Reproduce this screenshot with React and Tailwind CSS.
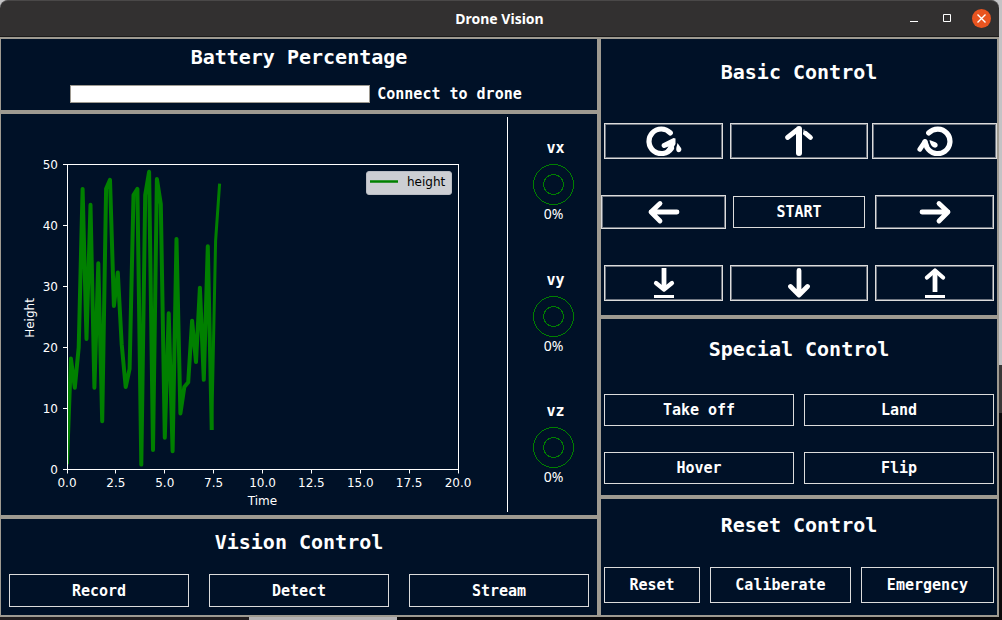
import React from "react";

const SAMPLES = [
  1.2, 18.2, 13.4, 20, 46, 21.4, 43.4, 13.4, 33.8, 7.9, 46, 47.5, 26.8, 32.3, 20.5, 13.5, 16.5, 45, 46,
  0.8, 45, 48.8, 3.2, 47.6, 43.5, 5.2, 25.6, 3, 37.8, 9.2, 13.5, 14.3, 24.4, 17.6, 29.8, 14.7, 36.6, 6.8,
  37.5, 46.6,
];

const PLOT = { left: 66, top: 50, width: 391, height: 305 };
const px = (t) => PLOT.left + (t / 20) * PLOT.width;
const py = (v) => PLOT.top + 0.5 + PLOT.height - (v / 50) * PLOT.height;
const toPoints = (samples, start = 0) =>
  samples.map((v, i) => `${px((i + start) * 0.2).toFixed(1)},${py(v).toFixed(1)}`).join(" ");

function HeightChart() {
  return (
    <svg
      viewBox="0 0 506 401"
      className="block w-full font-['DejaVu_Sans'] text-[12px]"
      role="img"
      aria-label="Height over time"
    >
      <clipPath id="plot-area">
        <rect x={PLOT.left} y={PLOT.top} width={PLOT.width} height={PLOT.height} />
      </clipPath>
      <g fill="none" stroke="#008000" strokeLinejoin="round" strokeLinecap="square" clipPath="url(#plot-area)">
        <polyline points={toPoints(SAMPLES.slice(0, 38))} strokeWidth="4" />
        <polyline points={toPoints(SAMPLES.slice(37), 37)} strokeWidth="3" />
      </g>
      <rect
        x={PLOT.left + 0.5}
        y={PLOT.top + 0.5}
        width={PLOT.width}
        height={PLOT.height}
        fill="none"
        stroke="#fff"
      />
      {[0, 10, 20, 30, 40, 50].map((v) => (
        <g key={v}>
          <line x1={PLOT.left - 4} x2={PLOT.left} y1={py(v)} y2={py(v)} stroke="#fff" />
          <text x={PLOT.left - 9} y={py(v) + 4.5} textAnchor="end" fill="#fff">
            {v}
          </text>
        </g>
      ))}
      {[0, 2.5, 5, 7.5, 10, 12.5, 15, 17.5, 20].map((t) => {
        const x = Math.floor(px(t)) + 0.5;
        return (
          <g key={t}>
            <line x1={x} x2={x} y1={py(0)} y2={py(0) + 4} stroke="#fff" />
            <text x={px(t)} y={py(0) + 17.5} textAnchor="middle" fill="#fff">
              {t.toFixed(1)}
            </text>
          </g>
        );
      })}
      <text x={px(10)} y="391" textAnchor="middle" fill="#fff">
        Time
      </text>
      <text transform="translate(33 204) rotate(-90)" textAnchor="middle" fill="#fff">
        Height
      </text>
      <rect x="365.5" y="57.5" width="85" height="23" rx="2.5" fill="#ccced3" stroke="#b9bcc3" />
      <line x1="369" x2="397" y1="67.5" y2="67.5" stroke="#008000" strokeWidth="2.5" />
      <text x="406" y="72" fill="#000">
        height
      </text>
    </svg>
  );
}

function Gauge({ label }) {
  return (
    <div className="flex flex-col items-center">
      <div className="pl-1 text-[15px] leading-5 font-bold">{label}</div>
      <svg
        viewBox="0 0 41 41"
        className="mt-1.5 size-[41px]"
        fill="none"
        stroke="#008000"
        shapeRendering="crispEdges"
        aria-hidden="true"
      >
        <circle cx="20.5" cy="20.5" r="20" />
        <circle cx="20.5" cy="20.5" r="10" />
      </svg>
      <div className="mt-px font-['Noto_Sans'] text-[14px] leading-4">0%</div>
    </div>
  );
}

function Heading({ children }) {
  return <h2 className="text-center text-[20px] leading-6 font-bold">{children}</h2>;
}

function Button({ className = "", children }) {
  return (
    <button type="button" className={`border border-[#dcdcdc] text-[15px] leading-5 font-bold ${className}`}>
      {children}
    </button>
  );
}

function IconButton({ label, className = "", children }) {
  return (
    <button
      type="button"
      aria-label={label}
      className={`flex items-center justify-center border border-[#dcdcdc] inset-ring inset-ring-[#6f7681] ${className}`}
    >
      <svg
        viewBox="0 0 36 30"
        className="h-[30px] w-9"
        fill="none"
        stroke="#fff"
        strokeWidth="4.8"
        strokeLinecap="round"
        strokeLinejoin="round"
      >
        {children}
      </svg>
    </button>
  );
}

function Panel({ className = "", children }) {
  return <section className={`border-2 border-[#9e9a91] ${className}`}>{children}</section>;
}

export default function App() {
  return (
    <div className="flex min-h-screen flex-col bg-[#0b0a0c] font-['DejaVu_Sans_Mono',monospace] text-white">
      <div className="flex flex-1 bg-[#c4c3c5]">
        <div className="flex min-w-0 flex-1 flex-col">
          <header className="grid h-[37px] grid-cols-[1fr_auto_1fr] items-center rounded-t-lg border-t border-b border-t-[#4a4848] border-b-[#1b1a1a] bg-[#323030]">
            <h1 className="col-start-2 font-['Noto_Sans'] text-[14px] font-bold">Drone Vision</h1>
            <div className="flex items-center justify-end gap-[17px] pr-2">
              <button type="button" aria-label="Minimize" className="size-4">
                <svg viewBox="0 0 16 16" stroke="#fff">
                  <path d="M4 10.5h8" />
                </svg>
              </button>
              <button type="button" aria-label="Maximize" className="size-4">
                <svg viewBox="0 0 16 16" fill="none" stroke="#fff">
                  <path d="M4.500 3.500h7v7h-7z" />
                </svg>
              </button>
              <button type="button" aria-label="Close" className="size-[19px] rounded-full bg-[#e95420]">
                <svg viewBox="0 0 19 19" stroke="#fff" strokeWidth="1.400">
                  <path d="M5.500 5.500l8 8M13.500 5.500l-8 8" />
                </svg>
              </button>
            </div>
          </header>

          <main className="grid flex-1 grid-cols-[599fr_400fr] bg-[#001127]">
            <div className="flex flex-col">
              <Panel className="h-[75px] border-l pt-1.5">
                <Heading>Battery Percentage</Heading>
                <div className="mt-[15px] flex items-center justify-center gap-[7px] pr-1.5">
                  <div
                    role="progressbar"
                    aria-label="Battery"
                    aria-valuenow={0}
                    className="h-[18px] w-[300px] border border-[#9e9a91] bg-white"
                  />
                  <span className="text-[15px] leading-5 font-bold">Connect to drone</span>
                </div>
              </Panel>
              <Panel className="flex h-[405px] border-l">
                <div className="min-w-0 flex-1">
                  <HeightChart />
                </div>
                <div className="my-[3px] flex w-[90px] flex-col justify-between border-l border-white pt-[21px] pb-[27px] pl-0.5">
                  <Gauge label="vx" />
                  <Gauge label="vy" />
                  <Gauge label="vz" />
                </div>
              </Panel>
              <Panel className="flex-1 border-l px-2 pt-[11px] pb-2">
                <Heading>Vision Control</Heading>
                <div className="mt-5 grid grid-cols-3 gap-5">
                  <Button className="h-[33px]">Record</Button>
                  <Button className="h-[33px]">Detect</Button>
                  <Button className="h-[33px]">Stream</Button>
                </div>
              </Panel>
            </div>

            <div className="flex flex-col">
              <Panel className="h-[280px] pt-[21px]">
                <Heading>Basic Control</Heading>
                <div className="mt-[39px] grid grid-cols-[126fr_144fr_126fr] items-center gap-y-9">
                  <IconButton label="Rotate left" className="mr-1 ml-[3px] h-9">
                    <path d="M24.300 6.900A12.300 12.300 0 1 0 25.500 22.200" strokeWidth="5.2" />
                    <path d="M29.500 12.500L29.500 18L25.500 25L20 24L22.500 20.500L18.500 22C15.500 22 14.500 18.500 17 17.200L27.500 12Z" fill="#fff" stroke="none" />
                    <path d="M31.500 17L35 22C37 26 31 28 30.300 24C30 22 31 19.500 31.500 17Z" fill="#fff" stroke="none" />
                  </IconButton>
                  <IconButton label="Forward" className="mx-[3px] h-9">
                    <path d="M18 3V27" strokeWidth="6" />
                    <path d="M6.500 11.500L16 4M29.500 11.500L24.500 7.200" />
                    <path d="M23 3.500V9" strokeWidth="1" strokeLinecap="butt" />
                  </IconButton>
                  <IconButton label="Rotate right" className="ml-px h-9">
                    <path d="M11.700 6.900A12.300 12.300 0 1 1 10 21.500L8 16" strokeWidth="5.2" />
                    <path d="M2.800 23.300L8 15.500" />
                    <path d="M12.500 14L18.500 16.200C22.500 18 20.500 22.500 17 21.500C14.500 20.800 13 17.500 12.500 14Z" fill="#fff" stroke="none" />
                  </IconButton>
                  <IconButton label="Left" className="mr-px h-[34px]">
                    <path d="M5 15H31M14 6.500L5 15L14 24" />
                  </IconButton>
                  <Button className="mx-1.5 h-8">START</Button>
                  <IconButton label="Right" className="mr-[3px] ml-1 h-[34px]">
                    <path d="M5 15H31M22 6.500L31 15L22 24" />
                  </IconButton>
                  <IconButton label="Land down" className="mr-1 ml-[3px] h-9">
                    <path d="M18 0V21" strokeLinecap="butt" />
                    <path d="M10 15L18 21.500L26 15" strokeWidth="4.2" />
                    <path d="M8 28.500H28" strokeWidth="3" strokeLinecap="butt" />
                  </IconButton>
                  <IconButton label="Backward" className="mx-[3px] h-9">
                    <path d="M18 2.500V27M9.500 18.500L18 27L26.500 18.500" />
                  </IconButton>
                  <IconButton label="Up" className="mr-[3px] ml-1 h-9">
                    <path d="M18 3V24" strokeLinecap="butt" />
                    <path d="M10 9.500L18 2.500L26 9.500" strokeWidth="4.2" />
                    <path d="M8 28.500H28" strokeWidth="3" strokeLinecap="butt" />
                  </IconButton>
                </div>
              </Panel>
              <Panel className="h-[180px] px-[3px] pt-[18px]">
                <Heading>Special Control</Heading>
                <div className="mt-[33px] grid grid-cols-2 gap-x-2.5 gap-y-[26px]">
                  <Button className="h-8">Take off</Button>
                  <Button className="h-8">Land</Button>
                  <Button className="h-8">Hover</Button>
                  <Button className="h-8">Flip</Button>
                </div>
              </Panel>
              <Panel className="flex-1 px-[3px] pt-3.5 pb-3">
                <Heading>Reset Control</Heading>
                <div className="mt-[30px] grid grid-cols-[96fr_141fr_133fr] gap-2.5">
                  <Button className="h-9">Reset</Button>
                  <Button className="h-9">Caliberate</Button>
                  <Button className="h-9">Emergency</Button>
                </div>
              </Panel>
            </div>
          </main>
        </div>
        <div className="flex w-[3px] flex-col">
          <div className="flex-[365] bg-[#c4c3c5]" />
          <div className="flex-[48] bg-[#3a3838]" />
          <div className="flex-[204] bg-[#0b0a0c]" />
        </div>
      </div>
      <div className="flex h-[3px]">
        <div className="flex-[249] bg-[#231f20]" />
        <div className="flex-[148] bg-[#b4b3b5]" />
        <div className="flex-[605] bg-[#0b0a0c]" />
      </div>
    </div>
  );
}
